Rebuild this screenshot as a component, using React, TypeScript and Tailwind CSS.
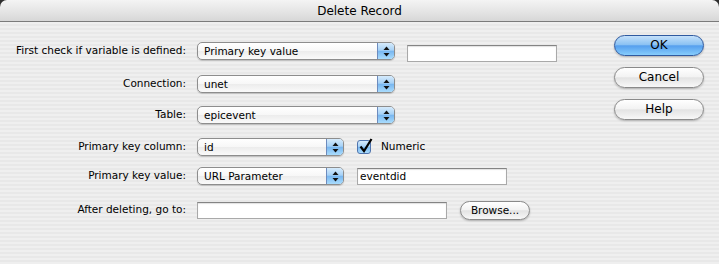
import React from 'react'

// Aqua-style "Delete Record" dialog

const stripes =
  'bg-[repeating-linear-gradient(to_bottom,#efefef_0px,#efefef_2px,#e8e8e8_2px,#e8e8e8_4px)]'

function Arrows() {
  return (
    <svg width="7" height="11" viewBox="0 0 7 11">
      <path d="M3.5 0.5 L6.5 4 L0.5 4 Z" fill="#111" />
      <path d="M3.5 10.5 L6.5 7 L0.5 7 Z" fill="#111" />
    </svg>
  )
}

function Popup({ value, wide }: { value: string; wide?: boolean }) {
  return (
    <div
      className={`flex h-[18px] ${wide ? 'w-[198px]' : 'w-[147px]'} rounded-[5px] border border-[#8d8d8d] bg-[linear-gradient(to_bottom,#ffffff_0%,#f7f7f7_50%,#ececec_51%,#fafafa_100%)] shadow-[0_1px_1px_rgba(0,0,0,0.18)]`}
    >
      <span className="flex-1 truncate pl-[6px] text-[10.5px] leading-[16px] text-black">{value}</span>
      <span className="flex w-[17px] items-center justify-center rounded-r-[4px] border-l border-[#6d8bbd] bg-[linear-gradient(to_bottom,#d6ebfc_0%,#a6d1f6_45%,#79b7f0_52%,#a9dcfd_100%)]">
        <Arrows />
      </span>
    </div>
  )
}

function Field({ w, value = '', className = '' }: { w: string; value?: string; className?: string }) {
  return (
    <div
      className={`h-[17px] ${w} border border-[#a9a9a9] border-t-[#848484] bg-white pl-[2px] text-[10.5px] leading-[15px] text-black shadow-[inset_0_1px_1px_rgba(0,0,0,0.12)] ${className}`}
    >
      {value}
    </div>
  )
}

function Row({ label, mt, children }: { label: string; mt: string; children: React.ReactNode }) {
  return (
    <div className={`flex h-[18px] items-center ${mt}`}>
      <span className="w-[186px] text-right text-[10.5px] text-black">{label}</span>
      <div className="ml-[11px] flex items-center">{children}</div>
    </div>
  )
}

function Button({ label, primary }: { label: string; primary?: boolean }) {
  return (
    <button
      className={`h-[21px] w-[90px] rounded-full border text-[12px] leading-[19px] text-black shadow-[0_1px_2px_rgba(0,0,0,0.25)] ${
        primary
          ? 'border-[#2f5aa0] bg-[linear-gradient(to_bottom,#c4e0fa_0%,#8cc2f3_45%,#569fee_52%,#86cdfc_100%)]'
          : 'border-[#8a8a8a] bg-[linear-gradient(to_bottom,#ffffff_0%,#f3f3f3_45%,#e3e3e3_52%,#f8f8f8_100%)]'
      }`}
    >
      {label}
    </button>
  )
}

export default function App() {
  return (
    <div className="h-[264px] w-[719px] bg-[#2e2e2e] font-['DejaVu_Sans',sans-serif]">
      <div className="flex h-full flex-col overflow-hidden rounded-t-[7px]">
        <div className="flex h-[22px] items-center justify-center border-b border-[#7b7b7b] bg-[linear-gradient(to_bottom,#f4f4f4_0%,#e6e6e6_50%,#d7d7d7_100%)] text-[12px] text-black">
          Delete Record
        </div>
        <div className={`flex flex-1 ${stripes}`}>
          <div className="flex flex-col">
            <Row label="First check if variable is defined:" mt="mt-[20px]">
              <Popup value="Primary key value" wide />
              <Field w="w-[150px]" className="ml-[12px] mt-[4px]" />
            </Row>
            <Row label="Connection:" mt="mt-[15px]">
              <Popup value="unet" wide />
            </Row>
            <Row label="Table:" mt="mt-[13px]">
              <Popup value="epicevent" wide />
            </Row>
            <Row label="Primary key column:" mt="mt-[14px]">
              <Popup value="id" />
              <span className="relative ml-[13px] h-[14px] w-[14px] rounded-[3px] border border-[#4f74ae] bg-[linear-gradient(to_bottom,#d6ebfc_0%,#a6d1f6_45%,#79b7f0_52%,#a9dcfd_100%)]">
                <svg className="absolute -top-[3px] left-[0px]" width="16" height="16" viewBox="0 0 16 16">
                  <path d="M2.5 8.5 L6 13 L13.5 1" fill="none" stroke="#000" strokeWidth="2.2" strokeLinejoin="miter" />
                </svg>
              </span>
              <span className="ml-[10px] text-[10.5px] text-black">Numeric</span>
            </Row>
            <Row label="Primary key value:" mt="mt-[11px]">
              <Popup value="URL Parameter" />
              <Field w="w-[150px]" value="eventdid" className="ml-[13px]" />
            </Row>
            <Row label="After deleting, go to:" mt="mt-[16px]">
              <Field w="w-[250px]" />
              <button className="ml-[13px] h-[19px] w-[70px] rounded-full border border-[#8a8a8a] bg-[linear-gradient(to_bottom,#ffffff_0%,#f3f3f3_45%,#e3e3e3_52%,#f8f8f8_100%)] text-[10.5px] leading-[17px] text-black shadow-[0_1px_2px_rgba(0,0,0,0.25)]">
                Browse...
              </button>
            </Row>
          </div>
          <div className="ml-auto mr-[15px] flex flex-col gap-[11px] pt-[13px]">
            <Button label="OK" primary />
            <Button label="Cancel" />
            <Button label="Help" />
          </div>
        </div>
      </div>
    </div>
  )
}
